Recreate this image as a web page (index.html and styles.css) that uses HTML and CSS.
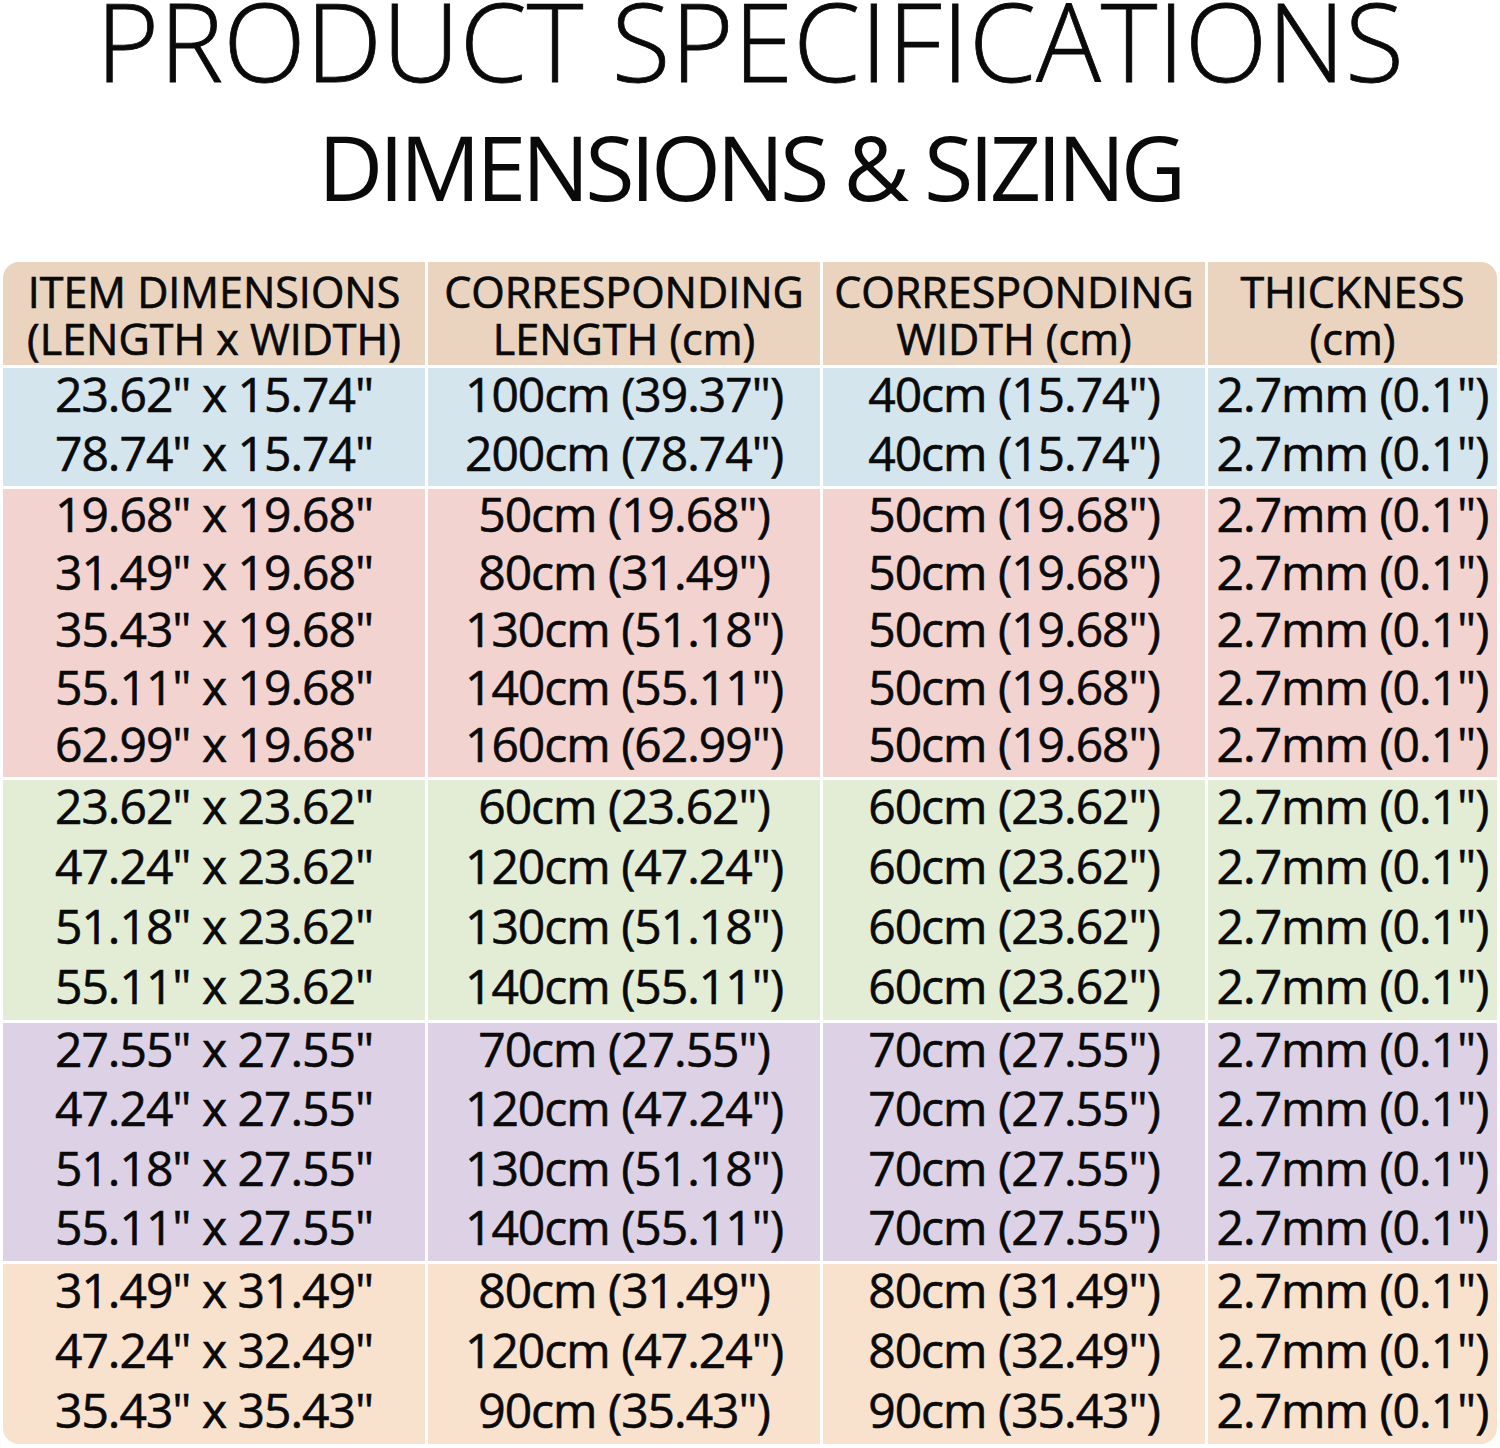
FILE: index.html
```html
<!DOCTYPE html>
<html lang="en">
<head>
<meta charset="utf-8">
<title>Product Specifications</title>
<link rel="stylesheet" href="styles.css">
</head>
<body>
<main class="page">
  <h1 class="title">PRODUCT SPECIFICATIONS</h1>
  <h2 class="subtitle">DIMENSIONS &amp; SIZING</h2>
  <section class="spec">
    <div class="group head">
      <div class="cell">ITEM DIMENSIONS<br>(LENGTH x WIDTH)</div>
      <div class="cell">CORRESPONDING<br>LENGTH (cm)</div>
      <div class="cell">CORRESPONDING<br>WIDTH (cm)</div>
      <div class="cell">THICKNESS<br>(cm)</div>
    </div>
    <div class="group blue">
      <div class="cell">23.62" x 15.74"<br>78.74" x 15.74"</div>
      <div class="cell">100cm (39.37")<br>200cm (78.74")</div>
      <div class="cell">40cm (15.74")<br>40cm (15.74")</div>
      <div class="cell">2.7mm (0.1")<br>2.7mm (0.1")</div>
    </div>
    <div class="group pink">
      <div class="cell">19.68" x 19.68"<br>31.49" x 19.68"<br>35.43" x 19.68"<br>55.11" x 19.68"<br>62.99" x 19.68"</div>
      <div class="cell">50cm (19.68")<br>80cm (31.49")<br>130cm (51.18")<br>140cm (55.11")<br>160cm (62.99")</div>
      <div class="cell">50cm (19.68")<br>50cm (19.68")<br>50cm (19.68")<br>50cm (19.68")<br>50cm (19.68")</div>
      <div class="cell">2.7mm (0.1")<br>2.7mm (0.1")<br>2.7mm (0.1")<br>2.7mm (0.1")<br>2.7mm (0.1")</div>
    </div>
    <div class="group green">
      <div class="cell">23.62" x 23.62"<br>47.24" x 23.62"<br>51.18" x 23.62"<br>55.11" x 23.62"</div>
      <div class="cell">60cm (23.62")<br>120cm (47.24")<br>130cm (51.18")<br>140cm (55.11")</div>
      <div class="cell">60cm (23.62")<br>60cm (23.62")<br>60cm (23.62")<br>60cm (23.62")</div>
      <div class="cell">2.7mm (0.1")<br>2.7mm (0.1")<br>2.7mm (0.1")<br>2.7mm (0.1")</div>
    </div>
    <div class="group purple">
      <div class="cell">27.55" x 27.55"<br>47.24" x 27.55"<br>51.18" x 27.55"<br>55.11" x 27.55"</div>
      <div class="cell">70cm (27.55")<br>120cm (47.24")<br>130cm (51.18")<br>140cm (55.11")</div>
      <div class="cell">70cm (27.55")<br>70cm (27.55")<br>70cm (27.55")<br>70cm (27.55")</div>
      <div class="cell">2.7mm (0.1")<br>2.7mm (0.1")<br>2.7mm (0.1")<br>2.7mm (0.1")</div>
    </div>
    <div class="group orange">
      <div class="cell">31.49" x 31.49"<br>47.24" x 32.49"<br>35.43" x 35.43"</div>
      <div class="cell">80cm (31.49")<br>120cm (47.24")<br>90cm (35.43")</div>
      <div class="cell">80cm (31.49")<br>80cm (32.49")<br>90cm (35.43")</div>
      <div class="cell">2.7mm (0.1")<br>2.7mm (0.1")<br>2.7mm (0.1")</div>
    </div>
  </section>
</main>
</body>
</html>
```

FILE: styles.css
```css
html, body {
  margin: 0;
  padding: 0;
  background: #ffffff;
}

.page {
  width: 1500px;
  height: 1448px;
  overflow: hidden;
  color: #0a0a0a;
}

.title {
  margin: 0;
  height: 112px;
  line-height: 82px;
  text-align: center;
  font-family: "Open Sans", sans-serif;
  font-stretch: 100%;
  font-weight: 300;
  font-size: 108px;
  letter-spacing: 0;
  -webkit-text-stroke: 0.8px #0a0a0a;
}

.subtitle {
  margin: 0;
  height: 150px;
  line-height: 108px;
  text-align: center;
  font-family: "Open Sans", sans-serif;
  font-stretch: 92%;
  font-weight: 400;
  font-size: 90px;
  letter-spacing: -4.4px;
}

.spec {
  margin: 0 3px;
  display: flex;
  flex-direction: column;
  gap: 3px;
  border-radius: 16px;
  overflow: hidden;
  background: #ffffff;
}

.group {
  display: grid;
  grid-template-columns: 422px 392px 382px 1fr;
  column-gap: 3px;
}

.cell {
  text-align: center;
  font-family: "Open Sans", sans-serif;
  font-stretch: 93%;
  font-weight: 500;
  font-size: 48px;
  line-height: 59px;
  letter-spacing: -1px;
  white-space: nowrap;
  padding-bottom: 4px;
  -webkit-text-stroke: 0.6px #0a0a0a;
}

/* nudge the text block up a little inside its coloured cell */
.cell::before {
  content: "";
  display: block;
  margin-top: -4px;
}

.head .cell {
  background: #ead4bf;
  font-size: 43px;
  font-stretch: 94%;
  letter-spacing: 0;
  line-height: 47px;
  padding: 6px 0 4px;
  height: 93px;
  -webkit-text-stroke: 0.7px #0a0a0a;
}

.head .cell::before {
  display: none;
}

.blue .cell { background: #d4e5ee; }
.pink .cell { background: #f3d3cf; line-height: 57.5px; }
.green .cell { background: #e3edd6; line-height: 60px; }
.purple .cell { background: #ddd2e5; line-height: 59.5px; }
.orange .cell { background: #f9e2cd; line-height: 60px; }
```
